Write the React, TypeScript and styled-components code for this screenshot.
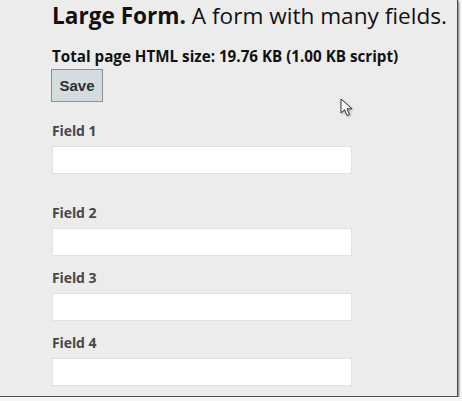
import React from 'react'
import styled, { createGlobalStyle } from 'styled-components'

const GlobalStyle = createGlobalStyle`
  html, body {
    margin: 0;
    padding: 0;
    background: #f7f7f7;
  }
`

const Frame = styled.div`
  position: relative;
  width: 457px;
  height: 396px;
  background: #ececec;
  border-right: 1px solid #4a4a4a;
  border-bottom: 1px solid #4a4a4a;
  box-shadow: 1px 1px 2px rgba(0, 0, 0, 0.55);
  overflow: hidden;
  font-family: "Open Sans", "Noto Sans", sans-serif;
`

const Page = styled.div`
  padding: 0 0 0 52px;
`

const Title = styled.h1`
  margin: 0;
  font-size: 22.6px;
  line-height: 31px;
  font-weight: 400;
  color: #111;
  white-space: nowrap;

  b {
    font-weight: 700;
  }
`

const SizeInfo = styled.div`
  margin-top: 16px;
  font-size: 15.2px;
  line-height: 18px;
  font-weight: 700;
  color: #111;
  white-space: nowrap;
`

const SaveButton = styled.button`
  display: flex;
  align-items: center;
  justify-content: center;
  margin: 4px 0 0 -1px;
  width: 52px;
  height: 33px;
  padding: 0;
  background: #d5dcdf;
  border: 1px solid #8a8f91;
  font-family: "Liberation Sans", Arial, sans-serif;
  font-size: 15px;
  font-weight: 700;
  color: #2e2e2e;
`

const FieldList = styled.div`
  display: flex;
  flex-direction: column;
  margin-top: 20px;
`

const Field = styled.div<{ gapAfter: number }>`
  display: flex;
  flex-direction: column;
  margin-bottom: ${({ gapAfter }) => gapAfter}px;
`

const Label = styled.label`
  font-size: 14px;
  line-height: 18px;
  font-weight: 700;
  color: #474747;
  letter-spacing: -0.1px;
`

const Input = styled.input`
  box-sizing: border-box;
  margin-top: 6px;
  width: 300px;
  height: 28px;
  background: #fff;
  border: 1px solid #e2e2e2;
  outline: none;
`

const Pointer = styled.svg`
  position: absolute;
  left: 340px;
  top: 98px;
  filter: drop-shadow(1px 1px 1px rgba(0, 0, 0, 0.3));
`

const fields = [
  { name: 'Field 1', gapAfter: 30 },
  { name: 'Field 2', gapAfter: 13 },
  { name: 'Field 3', gapAfter: 13 },
  { name: 'Field 4', gapAfter: 13 },
]

const App = () => {
  return (
    <>
      <GlobalStyle />
      <Frame>
        <Page>
          <Title>
            <b>Large Form.</b> A form with many fields.
          </Title>
          <SizeInfo>Total page HTML size: 19.76 KB (1.00 KB script)</SizeInfo>
          <SaveButton>Save</SaveButton>
          <FieldList>
            {fields.map((f) => (
              <Field key={f.name} gapAfter={f.gapAfter}>
                <Label>{f.name}</Label>
                <Input type="text" />
              </Field>
            ))}
          </FieldList>
        </Page>
        <Pointer width="16" height="20" viewBox="0 0 16 20">
          <path
            d="M1 1 L1 15 L4.5 11.5 L7 17.5 L9.5 16.5 L7 10.8 L12 10.8 Z"
            fill="#fff"
            stroke="#333"
            strokeWidth="1"
            strokeLinejoin="round"
          />
        </Pointer>
      </Frame>
    </>
  )
}

export default App
